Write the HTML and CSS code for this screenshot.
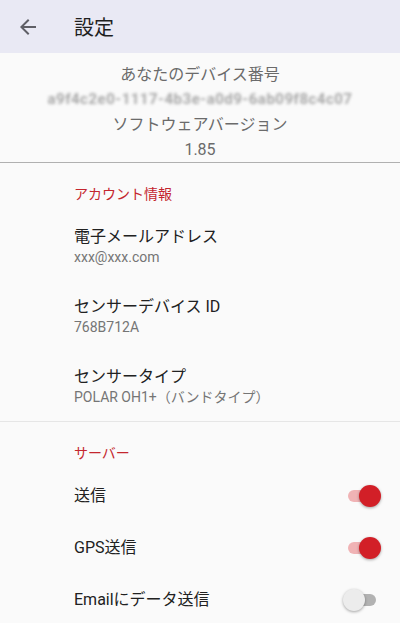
FILE: index.html
```html
<!DOCTYPE html>
<html lang="ja">
<head>
<meta charset="UTF-8">
<meta name="viewport" content="width=device-width, initial-scale=1.0">
<title>設定</title>
<link rel="stylesheet" href="styles.css">
</head>
<body>
<div class="appbar">
  <svg class="back" width="24" height="24" viewBox="0 0 24 24">
    <path d="M20 11H7.83l5.59-5.59L12 4l-8 8 8 8 1.41-1.41L7.83 13H20v-2z" fill="#5f5f66"/>
  </svg>
  <div class="appbar-title">設定</div>
</div>

<div class="device-info">
  <div class="info-line">あなたのデバイス番号</div>
  <div class="info-line device-id">a9f4c2e0-1117-4b3e-a0d9-6ab09f8c4c07</div>
  <div class="info-line">ソフトウェアバージョン</div>
  <div class="info-line">1.85</div>
</div>
<div class="divider dark"></div>

<div class="section-title">アカウント情報</div>
<div class="item">
  <div class="item-title">電子メールアドレス</div>
  <div class="item-sub">xxx@xxx.com</div>
</div>
<div class="item">
  <div class="item-title">センサーデバイス ID</div>
  <div class="item-sub">768B712A</div>
</div>
<div class="item">
  <div class="item-title">センサータイプ</div>
  <div class="item-sub">POLAR OH1+（バンドタイプ）</div>
</div>
<div class="divider"></div>

<div class="section-title">サーバー</div>
<div class="switch-row">
  <div class="item-title">送信</div>
  <div class="switch on"><span class="thumb"></span></div>
</div>
<div class="switch-row">
  <div class="item-title">GPS送信</div>
  <div class="switch on"><span class="thumb"></span></div>
</div>
<div class="switch-row">
  <div class="item-title">Emailにデータ送信</div>
  <div class="switch"><span class="thumb"></span></div>
</div>
</body>
</html>
```

FILE: styles.css
```css
body {
  margin: 0;
  padding: 0;
  background-color: #fafafa;
  font-family: Roboto, "Noto Sans CJK JP", sans-serif;
  color: #212121;
  overflow: hidden;
}
.appbar {
  height: 53px;
  background-color: #e9e9f4;
  display: flex;
  align-items: center;
}
.back {
  margin-left: 16px;
  margin-right: 34px;
}
.appbar-title {
  font-size: 20px;
  color: #1f1f1f;
}
.device-info {
  padding-top: 9px;
  text-align: center;
  color: #6b6b6b;
  font-size: 16px;
}
.info-line {
  height: 25px;
  line-height: 25px;
}
.device-id {
  color: #a8a8a8;
  font-size: 15px;
  font-weight: bold;
  letter-spacing: 0.5px;
  filter: blur(1.4px);
}
.divider {
  height: 1px;
  background-color: #e6e6e6;
}
.divider.dark {
  background-color: #b0b0b0;
}
.section-title {
  padding: 21px 0 7px 74px;
  font-size: 14px;
  line-height: 20px;
  color: #c4262e;
}
.item {
  padding: 15px 0 15px 74px;
}
.item-title {
  font-size: 16px;
  line-height: 22px;
  color: #212121;
}
.item-sub {
  font-size: 14px;
  line-height: 18px;
  color: #757575;
}
.switch-row {
  height: 52px;
  display: flex;
  align-items: center;
  justify-content: space-between;
  padding-left: 74px;
  padding-right: 20px;
}
.switch {
  position: relative;
  width: 28px;
  height: 12px;
  margin-right: 4px;
  border-radius: 6px;
  background-color: #b2b2b2;
}
.switch.on {
  background-color: #f0b3b5;
}
.thumb {
  position: absolute;
  top: -5px;
  left: -5px;
  width: 22px;
  height: 22px;
  border-radius: 50%;
  background-color: #ececec;
  box-shadow: 0 1px 3px rgba(0, 0, 0, 0.35);
}
.switch.on .thumb {
  left: 11px;
  background-color: #d21f27;
}
```
